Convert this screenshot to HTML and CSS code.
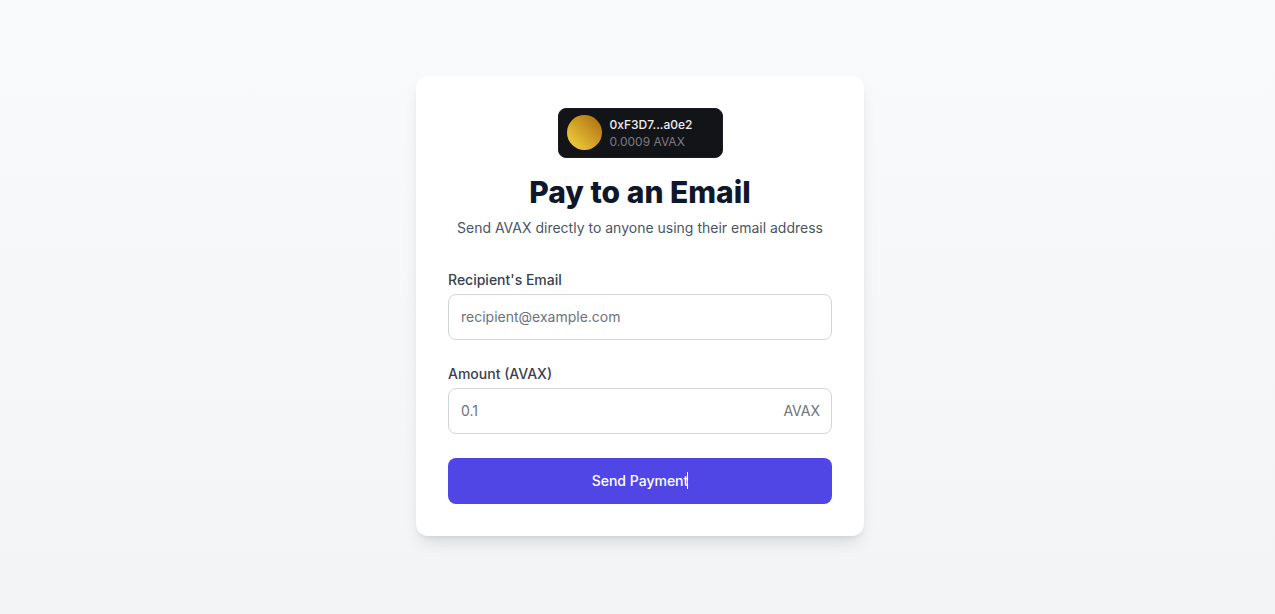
FILE: index.html
```html
<!DOCTYPE html>
<html lang="en">
<head>
<meta charset="utf-8">
<title>Pay to an Email</title>
<link rel="stylesheet" href="styles.css">
</head>
<body>
<main class="page">
  <section class="card">
    <header class="header">
      <button class="wallet" type="button">
        <span class="avatar"></span>
        <span class="wallet-info">
          <span class="address">0xF3D7...a0e2</span>
          <span class="balance">0.0009 AVAX</span>
        </span>
      </button>
      <h1 class="title">Pay to an Email</h1>
      <p class="subtitle">Send AVAX directly to anyone using their email address</p>
    </header>
    <form class="form">
      <div class="field">
        <label class="label" for="email">Recipient's Email</label>
        <div class="control"><input class="input" id="email" type="email" placeholder="recipient@example.com"></div>
      </div>
      <div class="field">
        <label class="label" for="amount">Amount (AVAX)</label>
        <div class="control"><input class="input" id="amount" type="text" inputmode="decimal" placeholder="0.1"><span class="unit">AVAX</span></div>
      </div>
      <button class="submit" type="button"><span class="submit-text">Send Payment<span class="caret"></span></span></button>
    </form>
  </section>
</main>
</body>
</html>
```
FILE: styles.css
```css
* { box-sizing: border-box; }
body {
  margin: 0;
  font-family: Inter, "Liberation Sans", sans-serif;
  font-size: 14px;
  line-height: 20px;
  color: #111827;
}
.page {
  min-height: 100vh;
  display: flex;
  align-items: center;
  justify-content: center;
  padding: 48px 32px 50px 37px;
  background: linear-gradient(#f9fafb, #f3f4f6);
}
.card {
  width: 100%;
  max-width: 448px;
  padding: 32px;
  background: #fff;
  border-radius: 12px;
  box-shadow: 0 10px 15px -3px rgba(0, 0, 0, 0.1), 0 4px 6px -4px rgba(0, 0, 0, 0.1);
}
.header {
  display: flex;
  flex-direction: column;
  align-items: center;
  text-align: center;
}
.wallet {
  display: flex;
  align-items: center;
  gap: 8px;
  min-width: 165px;
  height: 50px;
  padding: 0 8px 1px;
  border: 1px solid #1b1a22;
  border-radius: 8px;
  background: #131418;
  font: inherit;
  text-align: left;
}
.avatar {
  width: 35px;
  height: 35px;
  border-radius: 50%;
  background: linear-gradient(45deg, #fad743, #a66a0c);
}
.wallet-info { display: flex; flex-direction: column; font-size: 12px; line-height: 17px; }
.address { color: #eeeef0; font-weight: 500; }
.balance { color: #7c7a85; }
.title { margin: 16px 0 0; font-size: 30px; line-height: 36px; font-weight: 800; color: #0f172a; }
.subtitle { margin: 8px 0 0; color: #4b5563; }
.form { display: flex; flex-direction: column; gap: 24px; margin-top: 32px; }
.field { display: flex; flex-direction: column; gap: 4px; }
.label { font-weight: 500; color: #374151; }
.control {
  display: flex;
  align-items: center;
  height: 46px;
  padding: 0 11px 0 12px;
  border: 1px solid #d1d5db;
  border-radius: 8px;
}
.input { flex: 1; min-width: 0; padding: 0; border: 0; outline: 0; background: transparent; font: inherit; color: inherit; }
.input::placeholder { color: #6b7280; }
.unit { color: #6b7280; }
.submit { height: 46px; border: 0; border-radius: 8px; background: #4f46e5; color: #fff; font: inherit; font-weight: 500; }
.submit-text { position: relative; }
.caret { position: absolute; top: 0; bottom: 0; right: 0; width: 1px; background: #fff; }
```
